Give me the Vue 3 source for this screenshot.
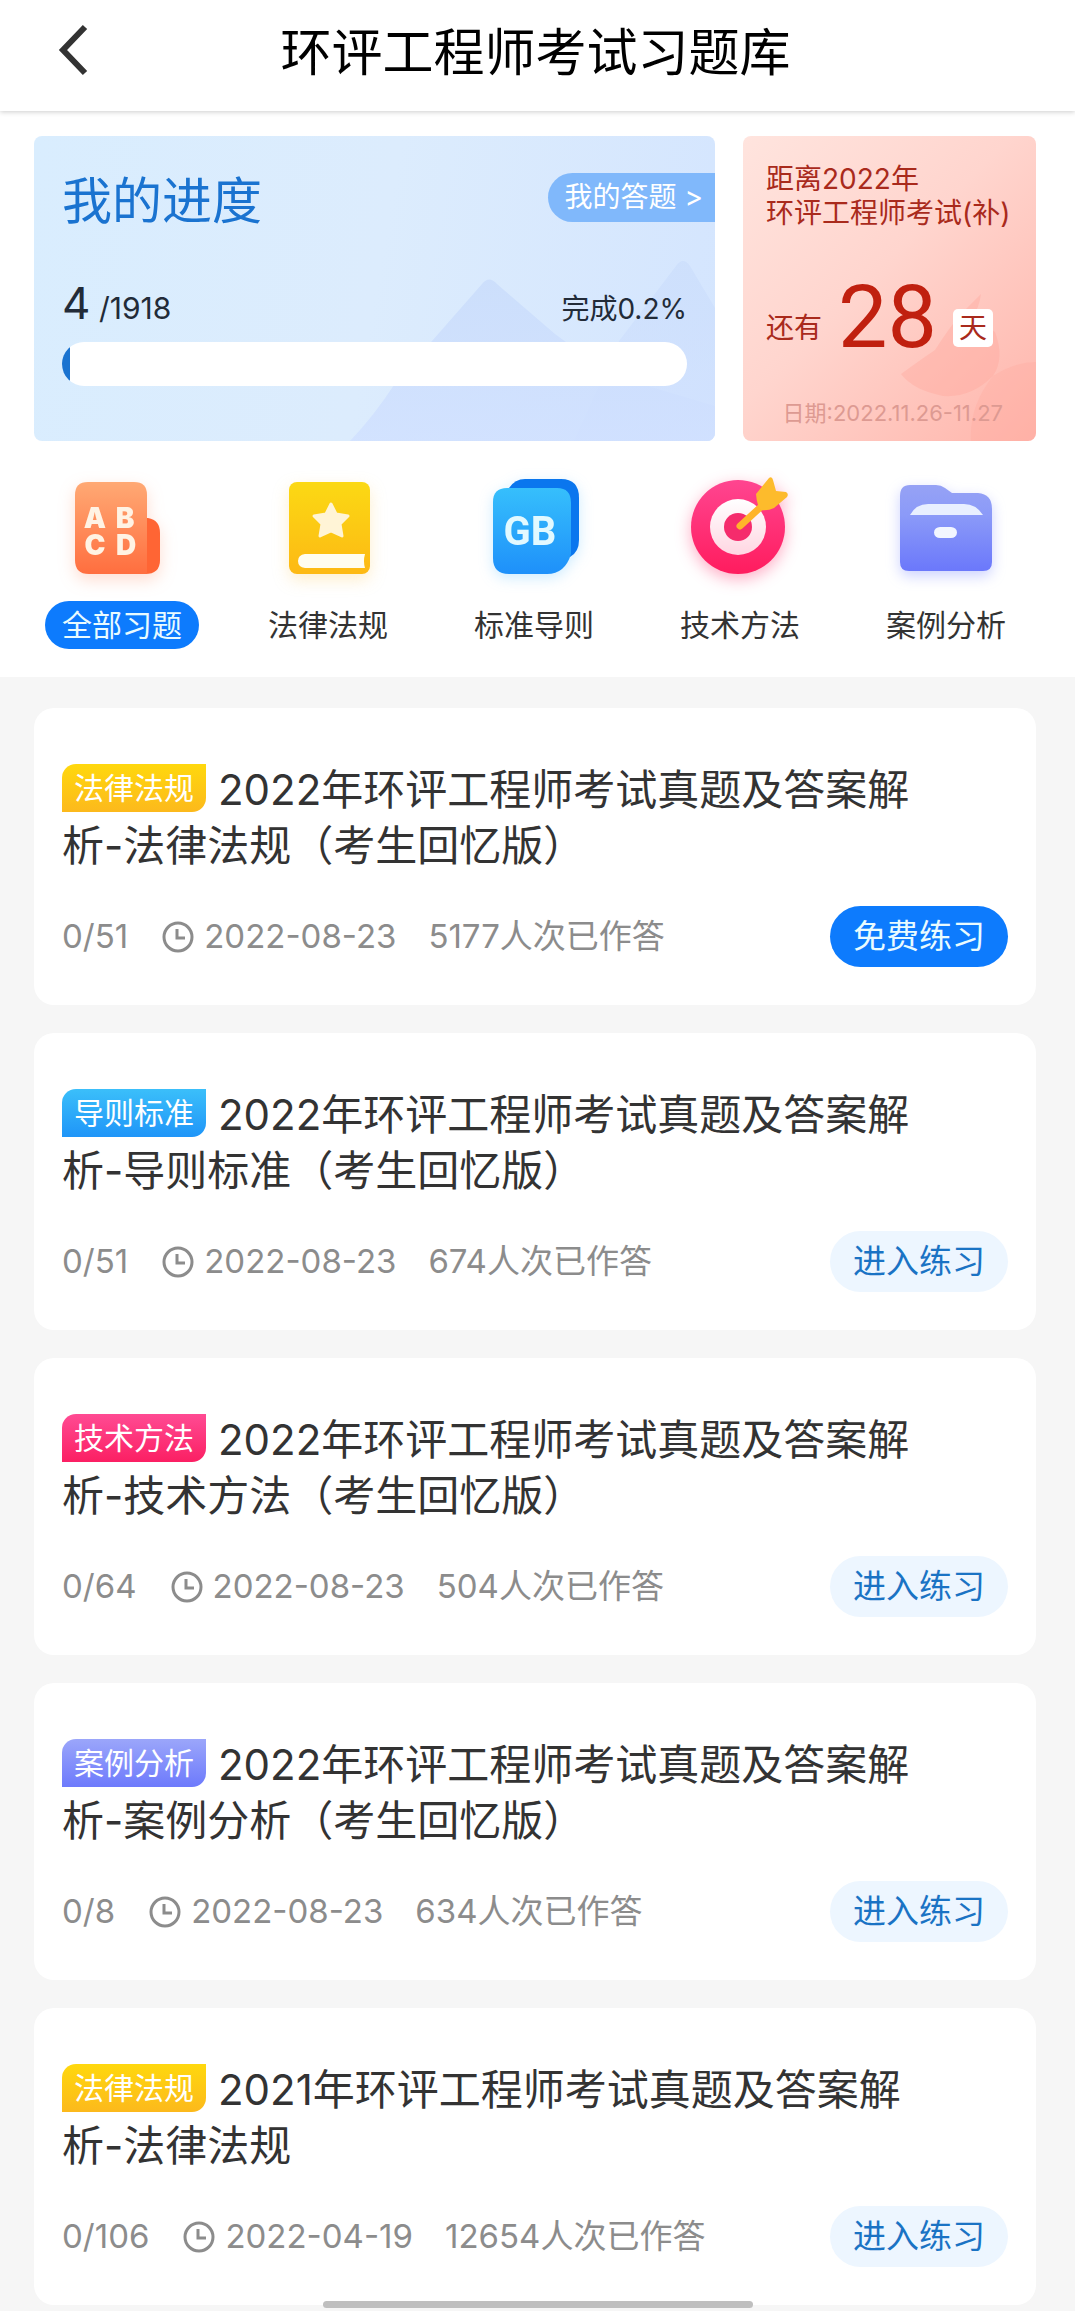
<script setup>
import { ref } from 'vue'

const answered = 4
const total = 1918
const percent = 0.2

const categories = [
  { id: 'all', label: '全部习题' },
  { id: 'law', label: '法律法规' },
  { id: 'standard', label: '标准导则' },
  { id: 'method', label: '技术方法' },
  { id: 'case', label: '案例分析' },
]
const active = ref('all')

const papers = [
  { id: 1, tag: '法律法规', tone: 'yellow', title: '2022年环评工程师考试真题及答案解析-法律法规（考生回忆版）', done: '0/51', date: '2022-08-23', count: 5177, free: true },
  { id: 2, tag: '导则标准', tone: 'blue', title: '2022年环评工程师考试真题及答案解析-导则标准（考生回忆版）', done: '0/51', date: '2022-08-23', count: 674, free: false },
  { id: 3, tag: '技术方法', tone: 'pink', title: '2022年环评工程师考试真题及答案解析-技术方法（考生回忆版）', done: '0/64', date: '2022-08-23', count: 504, free: false },
  { id: 4, tag: '案例分析', tone: 'violet', title: '2022年环评工程师考试真题及答案解析-案例分析（考生回忆版）', done: '0/8', date: '2022-08-23', count: 634, free: false },
  { id: 5, tag: '法律法规', tone: 'yellow', title: '2021年环评工程师考试真题及答案解析-法律法规', done: '0/106', date: '2022-04-19', count: 12654, free: false },
]
</script>

<template>
  <div class="page">
    <header class="topbar">
      <button class="back" type="button" aria-label="返回">
        <svg width="30" height="52" viewBox="0 0 30 52" fill="none" stroke="#333" stroke-width="6">
          <path d="M27 3 L5 26 L27 49" />
        </svg>
      </button>
      <h1>环评工程师考试习题库</h1>
    </header>

    <section class="hero">
      <div class="summary">
        <div class="progress-card">
          <svg class="scenery" viewBox="0 0 681 305" preserveAspectRatio="none" aria-hidden="true">
            <defs>
              <linearGradient id="peak" x1="0" y1="0" x2="0" y2="1">
                <stop offset="0" stop-color="#c9dcfb" />
                <stop offset="1" stop-color="#d0e0ff" />
              </linearGradient>
            </defs>
            <path d="M585 205 L642 130 Q649 120 656 130 L681 172 V305 H540 Z" fill="url(#peak)" opacity=".6" />
            <path d="M316 305 Q340 280 362 246 L448 148 Q455 139 463 148 L521 198 Q560 228 600 246 L681 270 V305 Z" fill="url(#peak)" opacity=".8" />
          </svg>
          <div class="progress-head">
            <h2>我的进度</h2>
            <a class="answers" href="#answers">我的答题 &gt;</a>
          </div>
          <div class="progress-stats">
            <span><b>{{ answered }}</b> /{{ total }}</span>
            <span class="rate">完成{{ percent }}%</span>
          </div>
          <div class="track" role="progressbar" aria-label="我的进度" :aria-valuenow="percent" aria-valuemin="0" aria-valuemax="100">
            <div class="fill" :style="{ width: percent + 1 + '%' }"></div>
          </div>
        </div>

        <div class="countdown">
          <svg class="scenery" viewBox="0 0 293 305" preserveAspectRatio="none" aria-hidden="true">
            <path d="M158 238 Q180 222 192 214 Q206 192 218 178 L238 158 Q236 172 230 180 L252 196 Q262 222 250 240 Q228 262 200 260 Q170 254 158 238 Z" fill="#ffa297" opacity=".35" />
            <path d="M250 240 Q272 226 293 226 V305 H228 Q226 270 250 240 Z" fill="#ffa297" opacity=".25" />
          </svg>
          <p class="exam">距离2022年<br>环评工程师考试(补)</p>
          <p class="days"><span>还有</span><strong>28</strong><span class="unit">天</span></p>
          <p class="date">日期:2022.11.26-11.27</p>
        </div>
      </div>

      <nav class="categories">
        <button
          v-for="item in categories"
          :key="item.id"
          type="button"
          :class="{ active: item.id === active }"
          @click="active = item.id"
        >
          <svg v-if="item.id === 'all'" class="icon glow-orange" viewBox="1 0 120 120" aria-hidden="true">
            <defs>
              <linearGradient id="orange" x1="0" y1="0" x2="0" y2="1">
                <stop offset="0" stop-color="#ffa974" /><stop offset="1" stop-color="#ff6e3f" />
              </linearGradient>
            </defs>
            <path d="M76 48 H87 Q99 50 99 63 V90 Q99 104 84 104 H70 Z" fill="#ff6534" />
            <path d="M27 12 H73 Q86 12 86 25 V104 H28 Q14 104 14 90 V25 Q14 12 27 12 Z" fill="url(#orange)" />
            <g class="glyph" fill="#fff3e4" font-size="28" font-weight="900" text-anchor="middle">
              <text x="34" y="58">A</text><text x="64" y="58">B</text>
              <text x="34" y="85">C</text><text x="65" y="85">D</text>
            </g>
          </svg>
          <svg v-else-if="item.id === 'law'" class="icon glow-yellow" viewBox="0 0 120 120" aria-hidden="true">
            <defs>
              <linearGradient id="gold" x1="0" y1="0" x2="0" y2="1">
                <stop offset="0" stop-color="#fbd914" /><stop offset="1" stop-color="#fdb914" />
              </linearGradient>
            </defs>
            <rect x="21" y="12" width="81" height="92" rx="8" fill="url(#gold)" />
            <path d="M63 34 L68 44 L80 46 L72 54 L74 66 L63 61 L52 66 L54 54 L46 46 L58 44 Z" fill="#fff4d6" stroke="#fff4d6" stroke-width="3" stroke-linejoin="round" />
            <path d="M37 84 H97 Q95 91 97 98 H37 Q30 97 30 91 Q30 85 37 84 Z" fill="#fffdf0" />
          </svg>
          <svg v-else-if="item.id === 'standard'" class="icon glow-blue" viewBox="1 0 120 120" aria-hidden="true">
            <defs>
              <linearGradient id="azure" x1="0" y1="0" x2="0" y2="1">
                <stop offset="0" stop-color="#36bffc" /><stop offset="1" stop-color="#1e90fa" />
              </linearGradient>
            </defs>
            <path d="M36 18 Q42 9 52 9 H88 Q106 9 106 28 V70 Q106 82 97 87 L60 60 Z" fill="#0a76ee" />
            <path d="M34 18 H84 Q98 18 98 33 V84 Q92 104 74 104 H36 Q20 104 20 88 V32 Q20 18 34 18 Z" fill="url(#azure)" />
            <text class="gb" x="57" y="75" font-size="40" font-weight="700" text-anchor="middle" fill="#e2f9ff">GB</text>
          </svg>
          <svg v-else-if="item.id === 'method'" class="icon glow-pink" viewBox="0 0 120 120" aria-hidden="true">
            <defs>
              <linearGradient id="rose" x1="0" y1="0" x2="0" y2="1">
                <stop offset="0" stop-color="#ff4590" /><stop offset="1" stop-color="#ff1c5e" />
              </linearGradient>
              <linearGradient id="ring" x1="0" y1="0" x2="0" y2="1">
                <stop offset="0" stop-color="#fff" /><stop offset="1" stop-color="#ffd6e2" />
              </linearGradient>
            </defs>
            <circle cx="58" cy="57" r="47" fill="url(#rose)" />
            <circle cx="58" cy="57" r="28" fill="url(#ring)" />
            <circle cx="58" cy="57" r="14" fill="#f52b6c" />
            <path d="M60 56 L84 34" stroke="#ffb42a" stroke-width="7" stroke-linecap="round" />
            <path d="M76 24 L89 8 Q92 6 93 10 L96 21 L106 22 Q109 24 107 27 L94 38 Q88 41 81 40 Q77 36 76 24 Z" fill="#fdbb2c" />
          </svg>
          <svg v-else class="icon glow-violet" viewBox="0 0 120 120" aria-hidden="true">
            <defs>
              <linearGradient id="iris" x1="0" y1="0" x2="0" y2="1">
                <stop offset="0" stop-color="#96a2f5" /><stop offset=".35" stop-color="#8b9af8" /><stop offset="1" stop-color="#6b78fb" />
              </linearGradient>
            </defs>
            <path d="M24 15 H50 Q55 15 59 18 L66 23 H92 Q106 24 106 39 V92 Q106 101 97 101 H23 Q14 101 14 92 V26 Q14 15 24 15 Z" fill="url(#iris)" />
            <path d="M24 45 Q30 34 42 34 H78 Q90 34 97 45 Z" fill="#e8efff" />
            <rect x="48" y="57" width="23" height="11" rx="6" fill="#f2f6ff" />
          </svg>
          <span class="label">{{ item.label }}</span>
        </button>
      </nav>
    </section>

    <main class="papers">
      <article v-for="paper in papers" :key="paper.id" class="paper">
        <h3><span class="tag" :class="paper.tone">{{ paper.tag }}</span>{{ paper.title }}</h3>
        <div class="paper-foot">
          <span>{{ paper.done }}</span>
          <svg class="clock" viewBox="0 0 32 32" fill="none" stroke="#8c8c8c" stroke-width="3" aria-hidden="true">
            <circle cx="16" cy="16" r="14" />
            <path d="M15 8 V17 H23" />
          </svg>
          <time>{{ paper.date }}</time>
          <span>{{ paper.count }}人次已作答</span>
          <button type="button" class="start" :class="{ free: paper.free }">{{ paper.free ? '免费练习' : '进入练习' }}</button>
        </div>
      </article>
    </main>

    <div class="home-bar" aria-hidden="true"></div>
  </div>
</template>

<style>
body {
  background: #f6f6f6;
}
</style>

<style scoped>
.page {
  font-family: Inter, "Noto Sans CJK SC", sans-serif;
  color: #333;
  background: #f6f6f6;
}

h1, h2, h3, p {
  margin: 0;
  font-weight: 400;
}

button {
  font: inherit;
  color: inherit;
  border: 0;
  padding: 0;
  background: none;
  cursor: pointer;
}

.topbar {
  display: grid;
  grid-template-columns: 1fr auto 1fr;
  align-items: center;
  height: 111px;
  padding: 0 4px 5px 0;
  box-sizing: border-box;
  background: #fff;
  box-shadow: 0 1px 5px rgba(0, 0, 0, 0.2);
  position: relative;
}

.topbar h1 {
  font-size: 51px;
  line-height: 60px;
  color: #000;
}

.back {
  justify-self: start;
  margin: 0 0 6px 58px;
  height: 52px;
}

.hero {
  background: #fff;
  padding: 25px 0 28px;
}

.summary {
  display: flex;
  gap: 28px;
  padding: 0 39px 0 34px;
}

.progress-card,
.countdown {
  position: relative;
  isolation: isolate;
  overflow: hidden;
  border-radius: 8px;
  height: 305px;
  box-sizing: border-box;
}

.scenery {
  position: absolute;
  inset: 0;
  width: 100%;
  height: 100%;
  z-index: -1;
}

.progress-card {
  flex: 1;
  padding: 37px 28px 0;
  background: linear-gradient(100deg, #d9edfe, #dcecfd 50%, #d4e5fe);
}

.progress-head {
  display: flex;
  align-items: flex-start;
  justify-content: space-between;
  height: 49px;
}

.progress-head h2 {
  font-size: 50px;
  line-height: 56px;
  color: #1a73d0;
}

.answers {
  margin-right: -28px;
  padding: 0 12px 0 17px;
  font-size: 28px;
  line-height: 49px;
  color: #fff;
  text-decoration: none;
  background: #80b8fb;
  border-radius: 25px 0 0 25px;
}

.progress-stats {
  display: flex;
  align-items: baseline;
  justify-content: space-between;
  height: 48px;
  margin-top: 57px;
  font-size: 30px;
  line-height: 48px;
  color: #222b38;
}

.progress-stats b {
  font-size: 44px;
  font-weight: 400;
}

.progress-stats .rate {
  font-size: 28px;
}

.track {
  height: 44px;
  margin-top: 15px;
  border-radius: 22px;
  overflow: hidden;
  background: #fff;
}

.fill {
  height: 100%;
  background: #1a73d0;
}

.countdown {
  flex: 0 0 293px;
  padding: 26px 0 0 23px;
  color: #a92a1c;
  background: linear-gradient(135deg, #ffe4de, #ffd5ce 45%, #ffb5ab);
}

.exam {
  font-size: 28px;
  line-height: 34px;
  white-space: nowrap;
}

.days {
  display: flex;
  align-items: flex-end;
  margin-top: 57px;
  font-size: 28px;
  line-height: 38px;
}

.days strong {
  margin: 0 16px;
  font-family: Roboto, sans-serif;
  font-size: 88px;
  line-height: 60px;
  font-weight: 400;
  color: #c0200f;
}

.unit {
  width: 40px;
  text-align: center;
  background: #fff;
  border-radius: 5px;
}

.date {
  margin: 52px 33px 0 0;
  font-size: 22px;
  line-height: 28px;
  text-align: right;
  white-space: nowrap;
  color: #dd9a92;
}

.categories {
  display: grid;
  grid-template-columns: repeat(5, 1fr);
  margin-top: 29px;
  padding: 0 26px 0 19px;
}

.categories button {
  display: flex;
  flex-direction: column;
  align-items: center;
  gap: 11px;
}

.icon {
  width: 120px;
  height: 120px;
  overflow: visible;
}

.glyph {
  font-family: Inter, sans-serif;
}

.gb {
  font-family: Roboto, sans-serif;
}

.glow-orange { filter: drop-shadow(0 6px 8px rgba(255, 120, 70, 0.25)); }
.glow-yellow { filter: drop-shadow(0 6px 8px rgba(253, 190, 60, 0.25)); }
.glow-blue { filter: drop-shadow(0 4px 7px rgba(60, 180, 255, 0.25)); }
.glow-pink { filter: drop-shadow(0 5px 8px rgba(255, 50, 110, 0.4)); }
.glow-violet { filter: drop-shadow(0 5px 7px rgba(110, 125, 255, 0.35)); }

.label {
  padding: 0 17px;
  font-size: 30px;
  line-height: 48px;
  border-radius: 24px;
}

.active .label {
  color: #e9fbff;
  background: #0d7bfd;
}

.papers {
  display: flex;
  flex-direction: column;
  gap: 28px;
  padding: 31px 39px 6px 34px;
}

.paper {
  padding: 54px 28px 38px;
  background: #fff;
  border-radius: 20px;
}

.paper h3 {
  padding-right: 80px;
  font-size: 42px;
  line-height: 56px;
}

.tag {
  display: inline-block;
  margin-right: 12px;
  padding: 0 12px;
  font-size: 30px;
  line-height: 48px;
  vertical-align: 6px;
  color: #fff;
  border-radius: 14px 0;
}

.yellow { background: linear-gradient(#ffd80d, #fcb91c); }
.blue { background: linear-gradient(#3bbffa, #1f95f8); }
.pink { background: linear-gradient(#ff4b93, #fb1f63); }
.violet { background: linear-gradient(#9ba6fa, #6d7afc); }

.paper-foot {
  display: flex;
  align-items: center;
  margin-top: 32px;
  font-size: 33px;
  line-height: 61px;
  color: #8c8c8c;
  white-space: nowrap;
}

.clock {
  width: 32px;
  height: 32px;
  margin: 0 10px 0 34px;
}

time {
  margin-right: 32px;
}

.start {
  margin-left: auto;
  padding: 0 23px;
  line-height: 61px;
  color: #1a73c4;
  background: #edf6ff;
  border-radius: 31px;
}

.start.free {
  color: #e9fbff;
  background: #0d7bfd;
}

.home-bar {
  position: fixed;
  left: 0;
  right: 0;
  bottom: 3px;
  width: 40%;
  height: 7px;
  margin: 0 auto;
  border-radius: 4px;
  background: #bfbfbf;
}
</style>
